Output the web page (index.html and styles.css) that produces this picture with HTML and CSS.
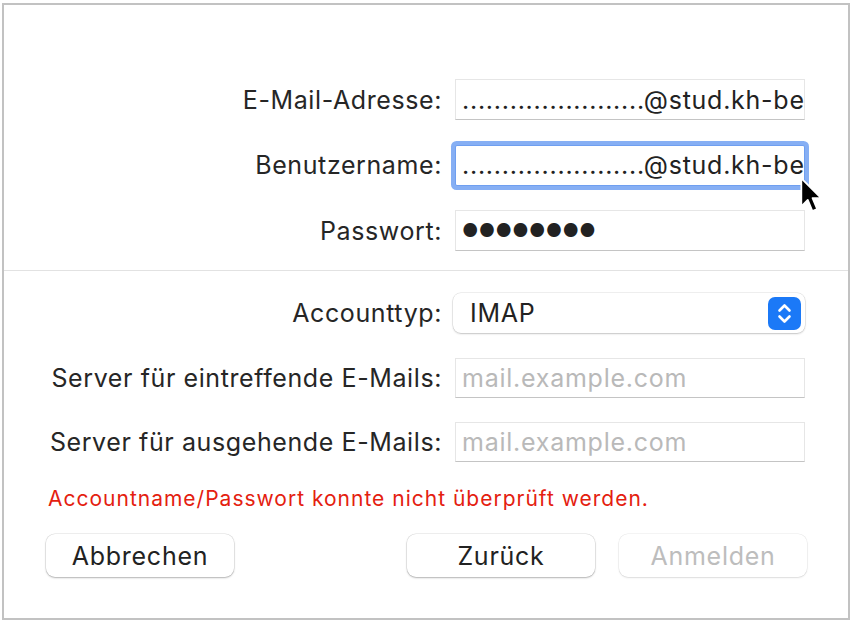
FILE: index.html
```html
<!DOCTYPE html>
<html lang="de">
<head>
<meta charset="utf-8">
<title>Account</title>
<link rel="stylesheet" href="styles.css">
</head>
<body>
<div class="window">
  <div class="form top">
    <label class="label">E-Mail-Adresse:</label>
    <div class="field"><span class="value">.......................@stud.kh-berlin.de</span></div>
    <label class="label">Benutzername:</label>
    <div class="field focused"><span class="value">.......................@stud.kh-berlin.de</span></div>
    <label class="label">Passwort:</label>
    <div class="field"><span class="value pw">●●●●●●●●</span></div>
  </div>
  <div class="divider"></div>
  <div class="form bottom">
    <label class="label">Accounttyp:</label>
    <div class="popup">
      <span class="popup-text">IMAP</span>
      <span class="stepper">
        <svg width="33" height="33" viewBox="0 0 33 33"><path d="M11.5 13.5 L16.5 8.5 L21.5 13.5 M11.5 19.5 L16.5 24.5 L21.5 19.5" fill="none" stroke="#fff" stroke-width="2.6" stroke-linecap="round" stroke-linejoin="round"/></svg>
      </span>
    </div>
    <label class="label">Server für eintreffende E-Mails:</label>
    <div class="field"><span class="value placeholder">mail.example.com</span></div>
    <label class="label">Server für ausgehende E-Mails:</label>
    <div class="field"><span class="value placeholder">mail.example.com</span></div>
  </div>
  <p class="error">Accountname/Passwort konnte nicht überprüft werden.</p>
  <div class="buttons">
    <button class="btn">Abbrechen</button>
    <span class="spacer"></span>
    <button class="btn">Zurück</button>
    <button class="btn disabled">Anmelden</button>
  </div>
  <svg class="cursor" width="28" height="42" viewBox="0 0 24 36">
    <path d="M2 2 L2 26 L7.5 20.5 L11.5 30 L15.5 28.3 L11.6 19 L19 19 Z" fill="#000" stroke="#fff" stroke-width="1.5" stroke-linejoin="round"/>
  </svg>
</div>
</body>
</html>
```

FILE: styles.css
```css
* { box-sizing: border-box; }
html, body { margin: 0; padding: 0; background: #fff; }
body {
  font-family: "Inter", "Liberation Sans", sans-serif;
  color: #222;
  padding: 3px 0 0 2px;
}
.window {
  position: relative;
  width: 848px;
  height: 617px;
  border: 2px solid #c2c2c2;
  background: #fff;
}
.form {
  display: grid;
  grid-template-columns: minmax(0, 1fr) 350px;
  column-gap: 13px;
  padding: 0 43px 0 45px;
  align-items: center;
}
.top {
  padding-top: 74px;
  grid-auto-rows: 41px;
  row-gap: 24.5px;
}
.bottom {
  padding-top: 22px;
  grid-template-rows: 40px 40px 40px;
  row-gap: 24.5px;
}
.label {
  text-align: right;
  font-size: 25px;
  letter-spacing: 0.6px;
  white-space: nowrap;
  color: #262626;
}
.field {
  height: 41px;
  border: 1px solid #e6e6e6;
  border-bottom-color: #c4c4c4;
  background: #fff;
  display: flex;
  align-items: center;
  padding: 0 0 0 6px;
  overflow: hidden;
}
.bottom .field { height: 40px; }
.field.focused {
  border: 1px solid #6f9ff0;
  box-shadow: 0 0 0 4px #86aff4;
  border-radius: 2px;
}
.value {
  font-size: 25px;
  letter-spacing: 0.75px;
  white-space: nowrap;
  color: #222;
}
.pw { font-size: 18px; letter-spacing: 0.3px; color: #222; }
.placeholder { color: #b9b9b9; }
.divider {
  margin-top: 19px;
  height: 1px;
  background: #e2e2e2;
}
.popup {
  margin-left: -2px;
  height: 40px;
  border-radius: 8px;
  background: #fff;
  box-shadow: 0 0 0 0.5px rgba(0,0,0,0.12), 0 1px 2px rgba(0,0,0,0.18);
  display: flex;
  align-items: center;
  justify-content: space-between;
  padding: 0 4px 0 17px;
}
.popup-text { font-size: 25px; letter-spacing: 0.75px; color: #222; }
.stepper {
  width: 33px;
  height: 33px;
  border-radius: 7px;
  background: #1b79f7;
  display: flex;
}
.error {
  margin: 25px 0 0 44px;
  font-size: 21px;
  letter-spacing: 1px;
  line-height: 24px;
  color: #e4200f;
}
.buttons {
  display: flex;
  align-items: center;
  gap: 24px;
  margin-top: 23px;
  padding: 0 41px 0 42px;
}
.spacer { flex: 1; }
.btn {
  width: 188px;
  height: 43px;
  border: none;
  border-radius: 9px;
  background: #fff;
  box-shadow: 0 0 0 0.5px rgba(0,0,0,0.12), 0 1px 2px rgba(0,0,0,0.25);
  font-family: "Inter", "Liberation Sans", sans-serif;
  font-size: 25px;
  letter-spacing: 0.75px;
  color: #222;
  padding: 0;
}
.btn.disabled {
  color: #bdbdbd;
  box-shadow: 0 0 0 0.5px rgba(0,0,0,0.08), 0 1px 2px rgba(0,0,0,0.1);
}
.cursor {
  position: absolute;
  left: 795px;
  top: 171px;
}
```
